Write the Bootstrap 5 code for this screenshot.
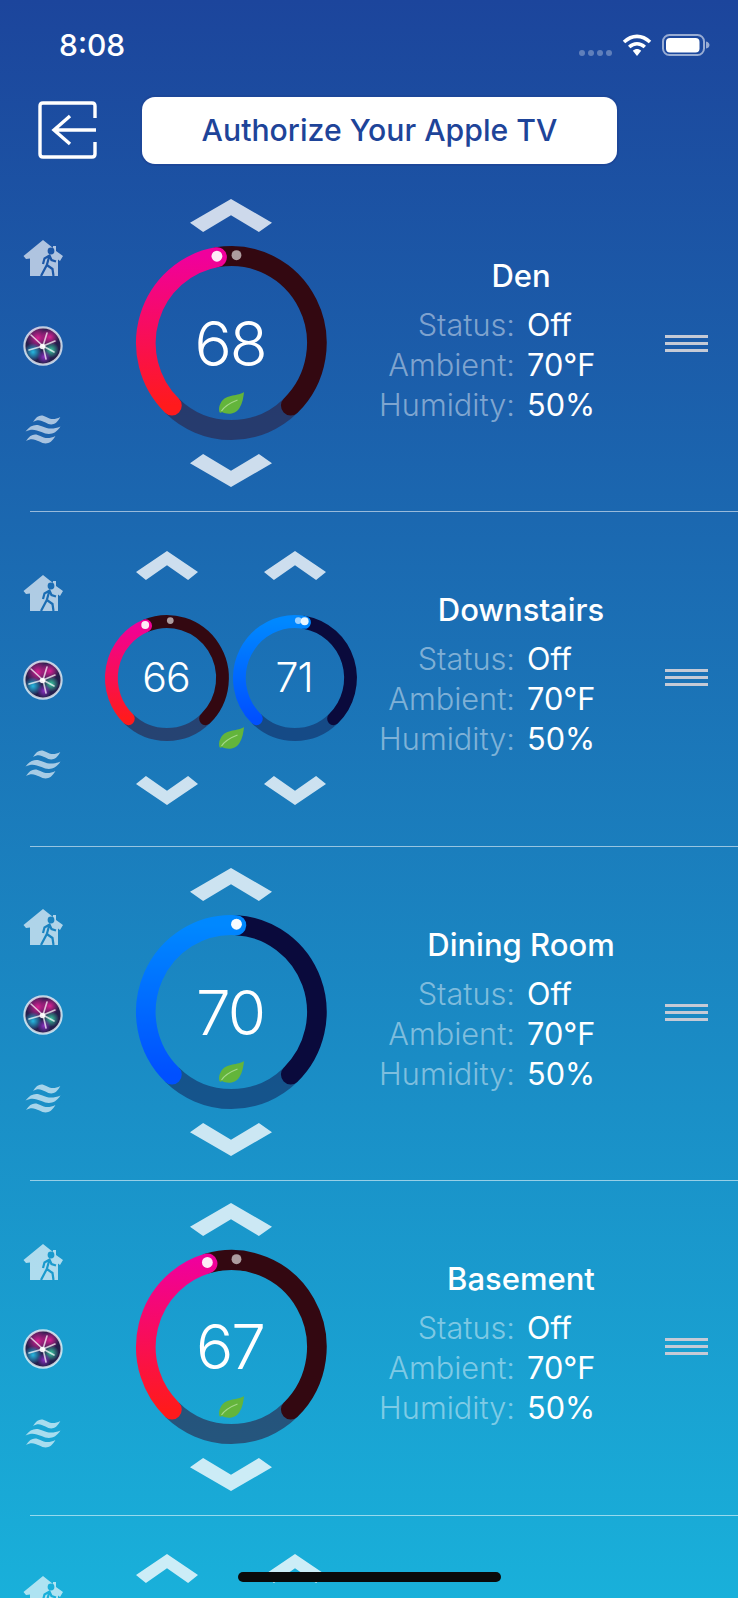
<!DOCTYPE html>
<html lang="en">
<head>
  <meta charset="UTF-8">
  <title>Thermostats</title>
  <link href="https://cdn.jsdelivr.net/npm/bootstrap@5.3.0/dist/css/bootstrap.min.css" rel="stylesheet">
  <style>
    html, body {
        height: 1598px;
        overflow: hidden;
    }

    body {
        position: relative;
        background: linear-gradient(180deg, #1c459c 0%, #19b0da 100%);
        font-family: "Inter", "Liberation Sans", sans-serif;
        color: #fff;
    }

    .status-strip {
        height: 90px;
        padding: 0 28px 0 59px;
    }

    .status-time {
        font-size: 30px;
        font-weight: 500;
        line-height: 1;
    }

    .signal-dots {
        gap: 3px;
        margin-top: 16px;
        margin-right: 10px;
    }

    .signal-dots span {
        width: 6px;
        height: 6px;
        border-radius: 50%;
        background: rgba(255, 255, 255, .3);
    }

    .wifi-mark {
        margin-right: 10px;
    }

    .top-strip {
        height: 80px;
        margin-bottom: 7.5px;
        padding-left: 38px;
        gap: 45px;
    }

    .auth-btn {
        width: 475px;
        height: 67px;
        border-radius: 13px;
        background: #fff;
        color: #1e4499;
        font-size: 30.2px;
        font-weight: 450;
        padding: 2px 0 0;
        box-shadow: 0 0 0 2px #1c4799;
        border: 0;
    }

    .room-row {
        height: 333.5px;
        padding-left: 23px;
        padding-bottom: 2px;
    }

    .room-stub {
        height: 82.5px;
        padding-left: 23px;
    }

    .stub-icons {
        padding-top: 61.5px;
    }

    .stub-dials {
        padding-top: 38.5px;
    }

    .room-sep {
        margin: 0 0 0 30px;
        height: 1px;
        border: 0;
        background: rgba(255, 255, 255, .55);
        opacity: 1;
    }

    .side-icons {
        width: 40px;
        height: 205px;
        margin-top: -1px;
    }

    .dial-col {
        width: 336px;
    }

    .dial-wrap {
        position: relative;
    }

    .dial-big {
        gap: 14px;
        width: 191px;
    }

    .dial-small {
        gap: 35px;
        width: 124px;
    }

    .dial-pair {
        gap: 4px;
    }

    .dial-num {
        font-weight: 300;
        letter-spacing: -2px;
        padding-right: 2px;
    }

    .dial-big .dial-num {
        font-size: 62px;
    }

    .dial-small .dial-num {
        font-size: 41px;
        letter-spacing: -1px;
    }

    .leaf-mark {
        position: absolute;
        left: 50%;
        transform: translateX(-50%);
    }

    .leaf-single {
        top: 193px;
    }

    .leaf-pair {
        top: 176px;
    }

    .info-col {
        width: 244px;
        padding-bottom: 2px;
    }

    .room-name {
        font-size: 31px;
        font-weight: 500;
        line-height: 32px;
        margin-bottom: 13px;
    }

    .info-grid {
        display: grid;
        grid-template-columns: minmax(0, 1fr) minmax(0, 1fr);
        column-gap: 12px;
        font-size: 30.7px;
        line-height: 40px;
    }

    .info-label {
        justify-self: end;
        white-space: nowrap;
        font-weight: 300;
        color: rgba(255, 255, 255, .45);
    }

    .drag-lines {
        width: 43px;
        margin-left: 22px;
        gap: 4px;
    }

    .drag-lines span {
        height: 3px;
        background: #c5cad6;
    }

    .home-bar {
        position: absolute;
        left: 238px;
        top: 1572px;
        width: 263px;
        height: 10px;
        border-radius: 5px;
        background: #0a0a0a;
    }
  </style>
</head>
<body>

<div class="status-strip d-flex align-items-center">
  <div class="status-time">8:08</div>
  <div class="ms-auto d-flex align-items-center">
    <div class="signal-dots d-flex"><span></span><span></span><span></span><span></span></div>
    <svg width="30" height="22" viewBox="0 0 30 22" class="wifi-mark">
      <path d="M2 8 C10 0.5 20 0.5 28 8" fill="none" stroke="#fff" stroke-width="3.6"/>
      <path d="M7.2 13 C12 8.8 18 8.8 22.8 13" fill="none" stroke="#fff" stroke-width="3.6"/>
      <path d="M10.8 16.8 C13.5 14.4 16.5 14.4 19.2 16.8 L15 22 Z" fill="#fff"/>
    </svg>
    <svg width="48" height="22" viewBox="0 0 48 22">
      <rect x="1" y="1" width="41" height="20" rx="6.5" fill="none" stroke="#fff" stroke-opacity=".55" stroke-width="2"/>
      <rect x="4" y="4" width="33.5" height="14.5" rx="4" fill="#fff"/>
      <path d="M44 7.5 C46.5 8 47.5 9.5 47.5 11 C47.5 12.5 46.5 14 44 14.5 Z" fill="#fff" fill-opacity=".55"/>
    </svg>
  </div>
</div>

<div class="top-strip d-flex align-items-center">
  <svg width="59" height="58" viewBox="0 0 59 58" class="flex-shrink-0">
    <path d="M57 17 V5 Q57 2 54 2 H5 Q2 2 2 5 V53 Q2 56 5 56 H54 Q57 56 57 53 V41" fill="none" stroke="#fff" stroke-width="3.4"/>
    <path d="M32 15 L16 29 L32 43 M16 29 H58" fill="none" stroke="#fff" stroke-width="3.4"/>
  </svg>
  <button class="btn auth-btn" type="button">Authorize Your Apple TV</button>
</div>

<div id="rooms"></div>
<div class="home-bar"></div>

<script>
  const redRing = { top: '#f0009c', bottom: '#ff1a1c', dark: '#330811', under: 'rgba(45, 35, 71, .62)' };
  const blueRing = { top: '#0088ff', bottom: '#0050ff', dark: '#0a0a3c', under: 'rgba(18, 45, 100, .6)' };

  const rooms = [
      { name: 'Den', dials: [{ temp: 68, ring: redRing }] },
      { name: 'Downstairs', dials: [{ temp: 66, ring: redRing }, { temp: 71, ring: blueRing }] },
      { name: 'Dining Room', dials: [{ temp: 70, ring: blueRing }] },
      { name: 'Basement', dials: [{ temp: 67, ring: redRing }] }
  ];

  const AMBIENT_ANGLE = 3.4;
  // the screenshot is a touch narrower than it is tall
  const X_SQUASH = 0.983;
  let uid = 0;

  function tempAngle(temp) {
      return (temp - 70) * 6.5 + AMBIENT_ANGLE;
  }

  function polar(c, r, deg) {
      const a = deg * Math.PI / 180;
      return [c + r * Math.sin(a), c - r * Math.cos(a)];
  }

  function arcPath(c, r, from, to) {
      const [x0, y0] = polar(c, r, from);
      const [x1, y1] = polar(c, r, to);
      const large = to - from > 180 ? 1 : 0;
      return `M${x0.toFixed(2)} ${y0.toFixed(2)} A${r} ${r} 0 ${large} 1 ${x1.toFixed(2)} ${y1.toFixed(2)}`;
  }

  function ringSvg(dial, size, r, width, dotBig, dotDim) {
      const c = size / 2;
      const id = 'ring' + (++uid);
      const angle = tempAngle(dial.temp);
      const [dx, dy] = polar(c, r + 1, angle);
      const [ax, ay] = polar(c, r + 1, AMBIENT_ANGLE);
      return `
        <svg width="${(size * X_SQUASH).toFixed(1)}" height="${size}" viewBox="0 0 ${size} ${size}" preserveAspectRatio="none" class="d-block overflow-visible">
          <defs>
            <linearGradient id="${id}" gradientUnits="userSpaceOnUse" x1="0" y1="${c - r}" x2="0" y2="${c + r * 0.72}">
              <stop offset="0" stop-color="${dial.ring.top}"/>
              <stop offset="1" stop-color="${dial.ring.bottom}"/>
            </linearGradient>
          </defs>
          <path d="${arcPath(c, r, 136, 224)}" fill="none" stroke="${dial.ring.under}" stroke-width="${width}"/>
          <path d="${arcPath(c, r, angle, 136)}" fill="none" stroke="${dial.ring.dark}" stroke-width="${width}" stroke-linecap="round"/>
          <path d="${arcPath(c, r, -136, angle)}" fill="none" stroke="url(#${id})" stroke-width="${width}" stroke-linecap="round"/>
          <circle cx="${ax.toFixed(2)}" cy="${ay.toFixed(2)}" r="${dotDim}" fill="#fff" fill-opacity=".6"/>
          <circle cx="${dx.toFixed(2)}" cy="${dy.toFixed(2)}" r="${dotBig}" fill="#fff" fill-opacity=".92"/>
        </svg>`;
  }

  function chevron(w, h, down) {
      const tip = h * 0.72;
      const inner = h * 0.49;
      const side = w * 0.16;
      return `
        <svg width="${w}" height="${h}" viewBox="0 0 ${w} ${h}" class="d-block">
          <polygon fill="#fff" fill-opacity=".78" ${down ? `transform="matrix(1 0 0 -1 0 ${h})"` : ''}
            points="${w / 2},0 ${w},${tip} ${w - side},${h} ${w / 2},${inner} ${side},${h} 0,${tip}"/>
        </svg>`;
  }

  function dialBlock(dial, pair) {
      const big = !pair;
      const size = big ? 194 : 126;
      const cw = big ? 82 : 62;
      const ch = big ? 33 : 29;
      return `
        <div class="${big ? 'dial-big' : 'dial-small'} d-flex flex-column align-items-center">
          ${chevron(cw, ch, false)}
          <div class="dial-wrap">
            ${big ? ringSvg(dial, size, 87, 20, 5.5, 5) : ringSvg(dial, size, 56.5, 13, 4, 3.4)}
            <div class="dial-num position-absolute top-0 start-0 w-100 h-100 d-flex align-items-center justify-content-center">${dial.temp}</div>
          </div>
          ${chevron(cw, ch, true)}
        </div>`;
  }

  function leafIcon(pair) {
      return `
        <svg class="leaf-mark ${pair ? 'leaf-pair' : 'leaf-single'}" width="26" height="22" viewBox="0 0 26 22">
          <path d="M26 0 C21 4.5 8 1.5 3 10.5 C1.2 13.6 0.6 17 1.4 20 C2 21 3.4 20.8 4 20 C8.5 22.6 17 23 21.5 16 C24.5 11.5 25.5 5 26 0 Z" fill="#63b53b"/>
          <path d="M3.5 19 C7 13.5 13 10.5 19.5 8" fill="none" stroke="#a5d88a" stroke-width="1.1"/>
        </svg>`;
  }

  function houseIcon() {
      const id = 'walker' + (++uid);
      return `
        <svg width="40" height="36" viewBox="0 0 40 36" class="d-block">
          <mask id="${id}">
            <path d="M20 0 L30 8 V6 H33 V11 L40 16 L37 21 L35 19.5 V36 H7 V18.5 L3 19 L0.5 16 Z" fill="#fff"/>
            <circle cx="28" cy="11" r="3.4" fill="#000"/>
            <path d="M26.5 15.5 L23.8 25 L18 36 M23.8 25 L29.5 29 L30.5 36 M20 24 L21.5 18.5 L26.5 15.5 L28.5 20 L33 21.5" fill="none" stroke="#000" stroke-width="2.2"/>
          </mask>
          <rect width="40" height="36" fill="#fff" fill-opacity=".65" mask="url(#${id})"/>
        </svg>`;
  }

  function siriIcon() {
      const n = ++uid;
      const blob = (name, color) => `
        <radialGradient id="${name}${n}">
          <stop offset="0" stop-color="${color}" stop-opacity="1"/>
          <stop offset="1" stop-color="${color}" stop-opacity="0"/>
        </radialGradient>`;
      const rays = [[24, 7], [8, 9], [32, 15], [6, 24], [31, 26], [23, 33]];
      return `
        <svg width="40" height="40" viewBox="0 0 40 40" class="d-block">
          <defs>
            ${blob('sp', '#d81f92')}${blob('sc', '#25b8e0')}${blob('sg', '#38c8a0')}${blob('sv', '#8a2fc0')}
            <filter id="sb${n}"><feGaussianBlur stdDeviation="0.5"/></filter>
          </defs>
          <circle cx="20" cy="20" r="18.4" fill="#241f4c"/>
          <circle cx="15" cy="12" r="12" fill="url(#sp${n})"/>
          <circle cx="27" cy="11" r="9" fill="url(#sp${n})"/>
          <circle cx="10" cy="26" r="9" fill="url(#sc${n})"/>
          <circle cx="28" cy="24" r="8" fill="url(#sg${n})"/>
          <circle cx="21" cy="31" r="7" fill="url(#sv${n})"/>
          <g filter="url(#sb${n})">
            ${rays.map(p => `<path d="M20 20 L${p[0]} ${p[1]}" stroke="#fff" stroke-opacity=".72" stroke-width="1.6" stroke-linecap="round"/>`).join('')}
            <circle cx="19.5" cy="20.5" r="2.8" fill="#fff" fill-opacity=".9"/>
          </g>
          <circle cx="20" cy="20" r="18.6" fill="none" stroke="#fff" stroke-opacity=".72" stroke-width="2.2"/>
        </svg>`;
  }

  function wavesIcon() {
      const band = 'M0 8 C5 1 11 0 17 3 C22 5.5 28 6 35 3 C30 11 23 12 16 8.5 C10 6 6 5 0 8 Z';
      return `
        <svg width="36" height="30" viewBox="0 0 36 30" class="d-block mx-auto">
          <g fill="#fff" fill-opacity=".62">
            <path d="${band}" transform="translate(8 -1) scale(.78 1)"/>
            <path d="${band}" transform="translate(.5 8.5)"/>
            <path d="${band}" transform="translate(1 18) scale(.84 1)"/>
          </g>
        </svg>`;
  }

  function roomRow(room) {
      const pair = room.dials.length === 2;
      return `
        <div class="room-row d-flex align-items-center">
          <div class="side-icons d-flex flex-column justify-content-between flex-shrink-0">
            ${houseIcon()}${siriIcon()}${wavesIcon()}
          </div>
          <div class="dial-col d-flex justify-content-center flex-shrink-0">
            <div class="dial-wrap dial-pair d-flex">
              ${room.dials.map(d => dialBlock(d, pair)).join('')}
              ${leafIcon(pair)}
            </div>
          </div>
          <div class="info-col flex-shrink-0">
            <div class="room-name text-center">${room.name}</div>
            <div class="info-grid">
              <div class="info-label">Status:</div><div>Off</div>
              <div class="info-label">Ambient:</div><div>70°F</div>
              <div class="info-label">Humidity:</div><div>50%</div>
            </div>
          </div>
          <div class="drag-lines d-flex flex-column flex-shrink-0"><span></span><span></span><span></span></div>
        </div>
        <hr class="room-sep">`;
  }

  // next room is only peeking in above the bottom edge
  function stubRow() {
      return `
        <div class="room-stub d-flex overflow-hidden">
          <div class="stub-icons side-icons flex-shrink-0">${houseIcon()}</div>
          <div class="stub-dials dial-col d-flex justify-content-center flex-shrink-0">
            <div class="dial-pair d-flex">
              <div class="dial-small d-flex justify-content-center">${chevron(62, 29, false)}</div>
              <div class="dial-small d-flex justify-content-center">${chevron(62, 29, false)}</div>
            </div>
          </div>
        </div>`;
  }

  function renderRooms() {
      document.getElementById('rooms').innerHTML = rooms.map(roomRow).join('') + stubRow();
  }

  renderRooms();
</script>
<script src="https://cdn.jsdelivr.net/npm/bootstrap@5.3.0/dist/js/bootstrap.bundle.min.js"></script>
</body>
</html>
